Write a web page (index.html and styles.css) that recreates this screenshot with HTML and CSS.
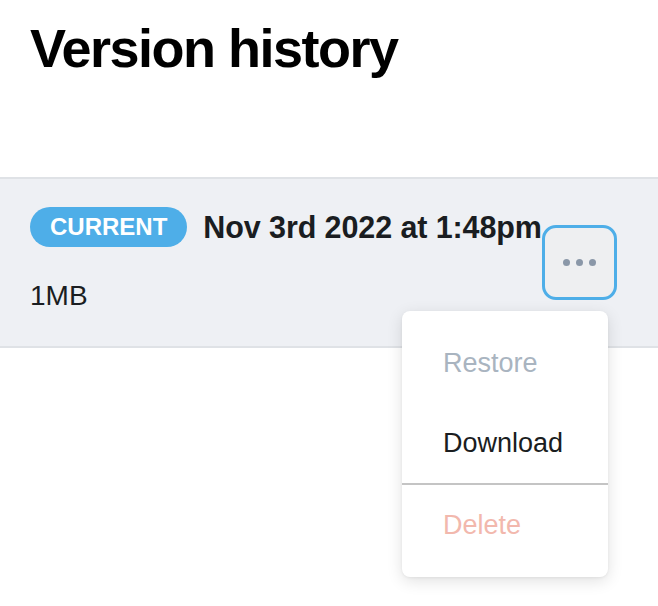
FILE: index.html
```html
<!DOCTYPE html>
<html lang="en">
<head>
    <meta charset="UTF-8">
    <meta name="viewport" content="width=device-width, initial-scale=1.0">
    <title>Version history</title>
    <link rel="stylesheet" href="styles.css">
</head>
<body>
    <!-- Title -->
    <h1 class="page-title">Version history</h1>

    <!-- Version list -->
    <div class="version-list">
        <div class="version-row">
            <div class="version-info">
                <div class="version-head">
                    <span class="badge">CURRENT</span>
                    <span class="version-date">Nov 3rd 2022 at 1:48pm</span>
                </div>
                <div class="version-size">1MB</div>
            </div>
            <div class="actions">
                <button class="more-btn" aria-label="More actions">
                    <span class="dot"></span><span class="dot"></span><span class="dot"></span>
                </button>
                <ul class="menu">
                    <li class="menu-item disabled">Restore</li>
                    <li class="menu-item">Download</li>
                    <li class="menu-divider"></li>
                    <li class="menu-item danger">Delete</li>
                </ul>
            </div>
        </div>
    </div>
</body>
</html>
```

FILE: styles.css
```css
html, body { min-height: 100%; }
body {
    font-family: "Liberation Sans", Arial, sans-serif;
    background-color: #ffffff;
    color: #1a1d21;
    margin: 0;
    min-height: 606px;
}
.page-title {
    font-size: 54px;
    line-height: 54px;
    letter-spacing: -1.5px;
    font-weight: bold;
    color: #000000;
    margin: 21px 0 0 0;
    padding: 0 30px;
}
.version-list {
    margin-top: 102px;
    border-top: 2px solid #dfe2e6;
    border-bottom: 2px solid #dfe2e6;
}
.version-row {
    background-color: #eef0f4;
    display: flex;
    align-items: center;
    justify-content: space-between;
    padding: 28px 41px 34px 30px;
}
.version-head { display: flex; align-items: center; }
.badge {
    background-color: #4eaee8;
    color: #ffffff;
    font-size: 24px;
    font-weight: bold;
    line-height: 40px;
    height: 40px;
    padding: 0 20px;
    border-radius: 20px;
}
.version-date {
    font-size: 30.5px;
    font-weight: bold;
    margin-left: 16px;
    letter-spacing: -0.1px;
}
.version-size {
    font-size: 28px;
    line-height: 32px;
    margin-top: 33px;
}
.actions { position: relative; margin-top: 6px; }
.more-btn {
    width: 75px;
    height: 75px;
    box-sizing: border-box;
    border: 3px solid #4eaee8;
    border-radius: 14px;
    background-color: #eeeff1;
    display: flex;
    align-items: center;
    justify-content: center;
    gap: 6px;
    padding: 0;
    cursor: pointer;
}
.dot {
    width: 7px;
    height: 7px;
    border-radius: 50%;
    background-color: #8a97a8;
}
.menu {
    position: absolute;
    z-index: 10;
    top: 86px;
    right: 9px;
    width: 206px;
    margin: 0;
    padding: 12px 0;
    list-style: none;
    background-color: #ffffff;
    border-radius: 8px;
    box-shadow: 0 4px 16px rgba(0, 0, 0, 0.12), 0 1px 3px rgba(0, 0, 0, 0.06);
}
.menu-item {
    font-size: 27px;
    line-height: 40px;
    padding: 20px 41px;
    color: #1a1d21;
}
.menu-item.disabled { color: #a9b4c0; }
.menu-item.danger { color: #f2b8ad; }
.menu-divider { height: 2px; background-color: #c4c4c4; }
```
